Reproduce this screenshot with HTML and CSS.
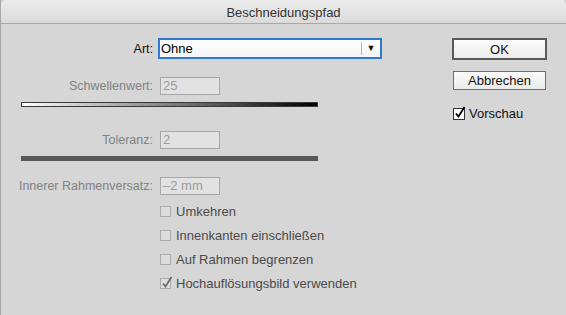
FILE: index.html
```html
<!DOCTYPE html>
<html>
<head>
  <meta charset="utf-8">
  <title>Beschneidungspfad</title>
  <link rel="stylesheet" href="styles.css">
</head>
<body>
  <div class="window">
    <div class="titlebar">Beschneidungspfad</div>
    <div class="content">
      <div class="form">
        <div class="field art">
          <label>Art:</label>
          <div class="select">
            <span class="value">Ohne</span>
            <span class="arrow">&#9660;</span>
          </div>
        </div>

        <div class="field dim schwelle">
          <label>Schwellenwert:</label>
          <div class="input">25</div>
        </div>
        <div class="ramp"></div>

        <div class="field dim toleranz">
          <label>Toleranz:</label>
          <div class="input">2</div>
        </div>
        <div class="bar"></div>

        <div class="field dim inner">
          <label>Innerer Rahmenversatz:</label>
          <div class="input">&ndash;2 mm</div>
        </div>

        <div class="checks">
          <div class="check"><span class="box"></span>Umkehren</div>
          <div class="check"><span class="box"></span>Innenkanten einschließen</div>
          <div class="check"><span class="box"></span>Auf Rahmen begrenzen</div>
          <div class="check">
            <span class="box"><svg class="tick" width="12" height="13" viewBox="0 0 12 13"><path d="M2 7.5 L4.5 10.5 L10.5 1" fill="none" stroke="currentColor" stroke-width="1.8"/></svg></span>Hochauflösungsbild verwenden
          </div>
        </div>
      </div>

      <div class="actions">
        <button class="ok">OK</button>
        <button class="cancel">Abbrechen</button>
        <div class="check preview">
          <span class="box"><svg class="tick" width="12" height="13" viewBox="0 0 12 13"><path d="M2 7.5 L4.5 10.5 L10.5 1" fill="none" stroke="currentColor" stroke-width="1.8"/></svg></span>Vorschau
        </div>
      </div>
    </div>
  </div>
</body>
</html>
```

FILE: styles.css
```css
body {
  margin: 0;
  background-color: #d6d6d6;
  font-family: "Liberation Sans", Arial, sans-serif;
  font-size: 12px;
  color: #111;
}
.window {
  width: 566px;
  height: 315px;
  box-sizing: border-box;
  border-left: 1px solid #a8a8a8;
  background: #d6d6d6;
  overflow: hidden;
}
.titlebar {
  height: 23px;
  line-height: 25px;
  text-align: center;
  font-size: 13px;
  color: #333;
  background: linear-gradient(#ececec, #dadada);
  border-bottom: 1px solid #a9a9a9;
  border-top-left-radius: 5px;
  border-top-right-radius: 5px;
}
.content {
  display: flex;
}
.form {
  width: 440px;
}
.field {
  display: flex;
  align-items: center;
}
.field label {
  width: 152px;
  text-align: right;
  font-size: 12.5px;
}
.dim {
  color: #828282;
}
.art {
  margin-top: 14px;
  height: 21px;
}
.select {
  margin-left: 5px;
  width: 224px;
  height: 21px;
  box-sizing: border-box;
  border: 2px solid #2e7ad1;
  background: linear-gradient(#ffffff, #f4f4f4);
  display: flex;
  align-items: center;
}
.select .value {
  flex: 1;
  padding-left: 1px;
  font-size: 13px;
  color: #000;
}
.select .arrow {
  width: 18px;
  height: 13px;
  line-height: 13px;
  border-left: 1px solid #b8b8b8;
  text-align: center;
  font-size: 9px;
  color: #111;
}
.input {
  margin-left: 7px;
  width: 60px;
  height: 18px;
  box-sizing: border-box;
  border: 1px solid #a7a7a7;
  background: #e2e2e2;
  padding-left: 2px;
  line-height: 16px;
  font-size: 13px;
  color: #9c9c9c;
}
.schwelle {
  margin-top: 18px;
  height: 18px;
}
.ramp {
  margin: 7px 0 0 20px;
  width: 297px;
  height: 5px;
  box-sizing: border-box;
  border: 1px solid #3a3a3a;
  background: linear-gradient(to right, #ffffff, #000000);
}
.toleranz {
  margin-top: 24px;
  height: 18px;
}
.bar {
  margin: 7px 0 0 20px;
  width: 297px;
  height: 5px;
  background: #585858;
}
.inner {
  margin-top: 16px;
  height: 18px;
}
.checks {
  margin-top: 4px;
  padding-left: 159px;
  color: #4a4a4a;
}
.check {
  display: flex;
  align-items: center;
  height: 24px;
  font-size: 13px;
}
.box {
  position: relative;
  width: 11px;
  height: 11px;
  box-sizing: border-box;
  border: 1px solid #ababab;
  background: #dcdcdc;
  margin-right: 5px;
  color: #6a6a6a;
}
.tick {
  position: absolute;
  left: 0;
  top: -3px;
}
.actions {
  padding-top: 14px;
  padding-left: 11px;
  width: 100px;
}
.actions button {
  display: block;
  font-family: inherit;
  font-size: 13px;
  color: #111;
  background: linear-gradient(#fbfbfb, #ececec);
  padding: 0;
}
.ok {
  width: 95px;
  height: 22px;
  border: 2px solid #5a5a5a;
}
.cancel {
  margin: 11px 0 0 1px;
  width: 93px;
  height: 19px;
  border: 1px solid #6e6e6e;
}
.preview {
  margin: 12px 0 0 1px;
  height: 23px;
  color: #111;
}
.preview .box {
  width: 12px;
  height: 12px;
  border: 1px solid #333;
  background: #fff;
  color: #000;
  margin-right: 4px;
}
```
